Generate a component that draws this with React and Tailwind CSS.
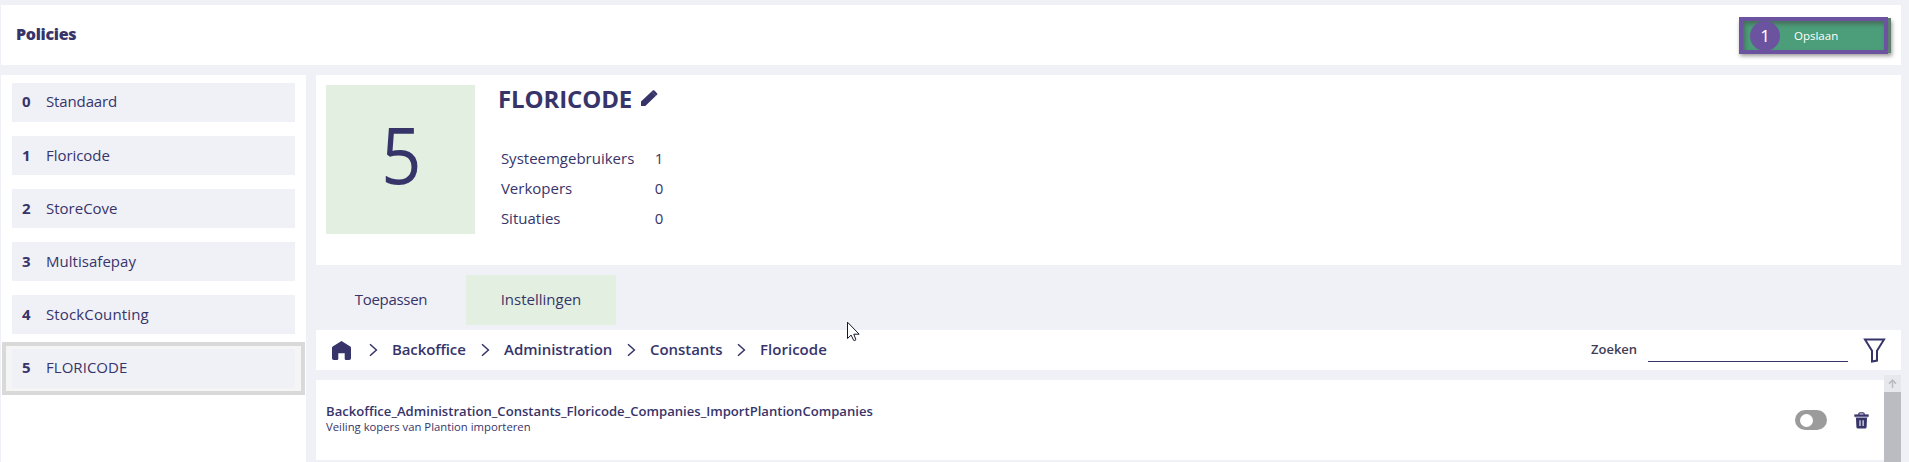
import React from 'react';

const policies = [
  { name: 'Standaard', tracking: 'tracking-[-0.13px]' },
  { name: 'Floricode', tracking: 'tracking-[-0.05px]' },
  { name: 'StoreCove', tracking: 'tracking-[0px]' },
  { name: 'Multisafepay', tracking: 'tracking-[0.03px]' },
  { name: 'StockCounting', tracking: 'tracking-[0.14px]' },
  { name: 'FLORICODE', tracking: 'tracking-[0.04px]' },
];

const stats = [
  ['Systeemgebruikers', '1'],
  ['Verkopers', '0'],
  ['Situaties', '0'],
];

const crumbs = [
  { name: 'Backoffice', width: 'w-[88px]', tracking: 'tracking-[-0.12px]' },
  { name: 'Administration', width: 'w-[122px]', tracking: 'tracking-[-0.03px]' },
  { name: 'Constants', width: 'w-[86px]', tracking: 'tracking-[-0.05px]' },
  { name: 'Floricode', width: 'w-[80px]', tracking: 'tracking-[0.03px]' },
];

function PolicyItem({ index, policy, selected }) {
  return (
    <li className={selected ? 'ml-px h-[53px] w-[303px] border-4 border-[#d9d9d9] bg-[#f5f5f5] px-1.5 py-[3px]' : 'mb-[14.1px] ml-[11px] w-[283px]'}>
      <div className={`flex h-[39px] items-center bg-[#f0f1f7] pl-[10px] ${index === 1 || index === 2 ? 'pb-[0.6px]' : 'pb-[2px]'}`}>
        <span className="w-[24px] font-bold">{index}</span>
        <span className={policy.tracking}>{policy.name}</span>
      </div>
    </li>
  );
}

function Chevron() {
  return (
    <svg className="h-[14px] w-[10px]" viewBox="0 0 10 14" fill="none" stroke="#37346a" strokeWidth="1.5">
      <path d="M2 1.2l6.4 5.8L2 12.8" />
    </svg>
  );
}

function HomeIcon() {
  return (
    <svg className="h-[19px] w-[19px]" viewBox="0 0 19 19" fill="#37346a">
      <path d="M9.5 0L18.3 5.6Q19 6.1 19 7V17.2Q19 19 17.2 19H14Q12.7 19 12.7 17.7V12.2H6.3V17.7Q6.3 19 5 19H1.8Q0 19 0 17.2V7Q0 6.1 .7 5.6Z" />
    </svg>
  );
}

function PencilIcon() {
  return (
    <svg className="h-[16px] w-[17px]" viewBox="0 0 17 16" fill="#37346a">
      <path d="M0 16V11.6L11.7.6Q12.6-.2 13.4.6L16 3.2Q16.8 4 16 4.8L4.3 16Z" />
      <path d="M10.6 1.8L14.8 5.8" stroke="#fff" strokeOpacity=".3" strokeWidth=".6" />
    </svg>
  );
}

function FilterIcon() {
  return (
    <svg className="h-[25px] w-[23px]" viewBox="0 0 23 25" fill="none" stroke="#37346a" strokeWidth="2" strokeLinejoin="miter">
      <path d="M2 1.5H21L14 12.8V22.6L9 23.6V12.8Z" />
    </svg>
  );
}

function TrashIcon() {
  return (
    <svg className="h-[17px] w-[15px]" viewBox="0 0 15 17">
      <path d="M4.8 3V2Q4.8.8 6 .8H9Q10.2.8 10.2 2V3" fill="none" stroke="#37346a" strokeWidth="1.2" />
      <path d="M.3 2.4H14.7V4.8H.3Z" fill="#37346a" />
      <path d="M1.5 4.8H13.5V6H1.5Z" fill="#a09fbd" />
      <path d="M2 6H13L12.6 15Q12.5 16.5 11 16.5H4Q2.5 16.5 2.4 15Z" fill="#37346a" />
      <path d="M6 8.2V14M9.1 8.2V14" stroke="#fff" strokeWidth="1.1" />
    </svg>
  );
}

export default function App() {
  return (
    <div className="relative flex h-[462px] w-[1909px] flex-col overflow-hidden bg-[#f0f1f7] pl-px pt-[5px] font-['Open_Sans',sans-serif] text-[15px] text-[#37346a]">
      <header className="flex h-[60px] w-[1900px] shrink-0 items-center bg-white pl-[15px]">
        <h1 className="pb-[2px] text-[16px] font-extrabold tracking-[-0.3px]">Policies</h1>
        <div className="ml-auto mr-[10px] mt-px flex h-[35px] w-[152px] bg-[#5f7e70] shadow-[1px_3px_4px_rgba(0,0,0,0.4)]">
          <button className="-mt-px flex h-[37px] w-[149px] items-center border-4 border-[#6b539f] bg-[#4b9e79] pl-[7px] text-white shadow-[inset_2px_3px_4px_rgba(70,70,70,0.55)]">
            <span className="flex h-[30px] w-[30px] items-center justify-center rounded-full bg-[#6b539f] font-['Noto_Sans',sans-serif] text-[17px]">1</span>
            <span className="ml-[14px] text-[11.5px]">Opslaan</span>
          </button>
        </div>
      </header>

      <div className="mt-[10px] flex min-h-0 flex-1 gap-[10px]">
        <nav className="w-[305px] shrink-0 bg-white pt-2">
          <ul>
            {policies.slice(0, 5).map((p, i) => (
              <PolicyItem key={p.name} index={i} policy={p} />
            ))}
          </ul>
          <ul className="-mt-[6.5px]">
            <PolicyItem index={5} policy={policies[5]} selected />
          </ul>
        </nav>

        <main className="flex w-[1585px] flex-col">
          <section className="flex h-[190px] shrink-0 bg-white pl-[10.4px] pt-[10px]">
            <div className="flex h-[149px] w-[149px] items-center justify-center bg-[#e3efe1] pb-[12px] text-[78px] leading-none">
              <span className="scale-x-90">5</span>
            </div>
            <div className="ml-[22.5px]">
              <div className="flex h-[27px] items-center">
                <h2 className="w-[143.5px] text-[24px] font-bold leading-none tracking-[-0.1px]">FLORICODE</h2>
                <span className="-mt-[2px]"><PencilIcon /></span>
              </div>
              <dl className="ml-[3px] mt-[31px] w-[162.5px]">
                {stats.map(([label, value]) => (
                  <div key={label} className="flex h-[30px] items-center justify-between">
                    <dt>{label}</dt>
                    <dd>{value}</dd>
                  </div>
                ))}
              </dl>
            </div>
          </section>

          <div className="mt-[10px] flex h-[50px] shrink-0">
            <div className="flex w-[150px] items-center justify-center pb-[2px] tracking-[-0.3px]">Toepassen</div>
            <div className="flex w-[150px] items-center justify-center bg-[#e3efe1] pb-[2px]">Instellingen</div>
          </div>

          <div className="mt-[5px] flex h-[40px] shrink-0 items-center bg-white pl-4">
            <HomeIcon />
            <div className="ml-[17px] flex font-semibold">
              {crumbs.map((c) => (
                <div key={c.name} className="flex items-center">
                  <Chevron />
                  <span className={`${c.width} ${c.tracking} -mt-px ml-[14px] whitespace-nowrap`}>{c.name}</span>
                </div>
              ))}
            </div>
            <div className="ml-auto mr-[15px] flex h-[24px] items-center">
              <label className="w-[57px] pb-[2px] text-[13px] font-semibold leading-[22px] text-[#3f3d56]">Zoeken</label>
              <div className="mr-[15px] h-[24px] w-[200px] border-b border-[#37346a]" />
              <FilterIcon />
            </div>
          </div>

          <div className="mt-[5px] flex min-h-0 flex-1">
            <div className="w-[1568px] pt-[5px]">
              <article className="flex h-[80px] items-center bg-white pl-[10px] pr-[15px]">
                <div className="pb-[3px]">
                  <h3 className="text-[13.1px] font-semibold leading-[17px]">Backoffice_Administration_Constants_Floricode_Companies_ImportPlantionCompanies</h3>
                  <p className="text-[11.3px] leading-[14px]">Veiling kopers van Plantion importeren</p>
                </div>
                <div className="ml-auto mr-[27px] flex h-5 w-8 items-center rounded-full bg-[#9b9b9b] pl-[5px]">
                  <span className="h-[13px] w-[13px] rounded-full bg-white" />
                </div>
                <TrashIcon />
              </article>
            </div>
            <div className="w-[17px] bg-[#bbbcc1]">
              <div className="flex h-[17px] items-center justify-center bg-[#e7e8ec]">
                <svg className="h-[9px] w-[9px]" viewBox="0 0 9 9" fill="none" stroke="#bbbcc1" strokeWidth="1.5">
                  <path d="M4.5 9V1.2M1 4.6L4.5 1.1 8 4.6" />
                </svg>
              </div>
            </div>
          </div>
        </main>
      </div>

      <svg className="absolute left-[847px] top-[321px] h-[21px] w-[13px]" viewBox="0 0 13 21" fill="#fff" stroke="#15152b" strokeWidth="1">
        <path d="M.5 1.2V17.5L4.1 14.1L6.7 19.4Q7.6 20 8.9 18.8L6.8 13.2H12.2Z" />
      </svg>
    </div>
  );
}
